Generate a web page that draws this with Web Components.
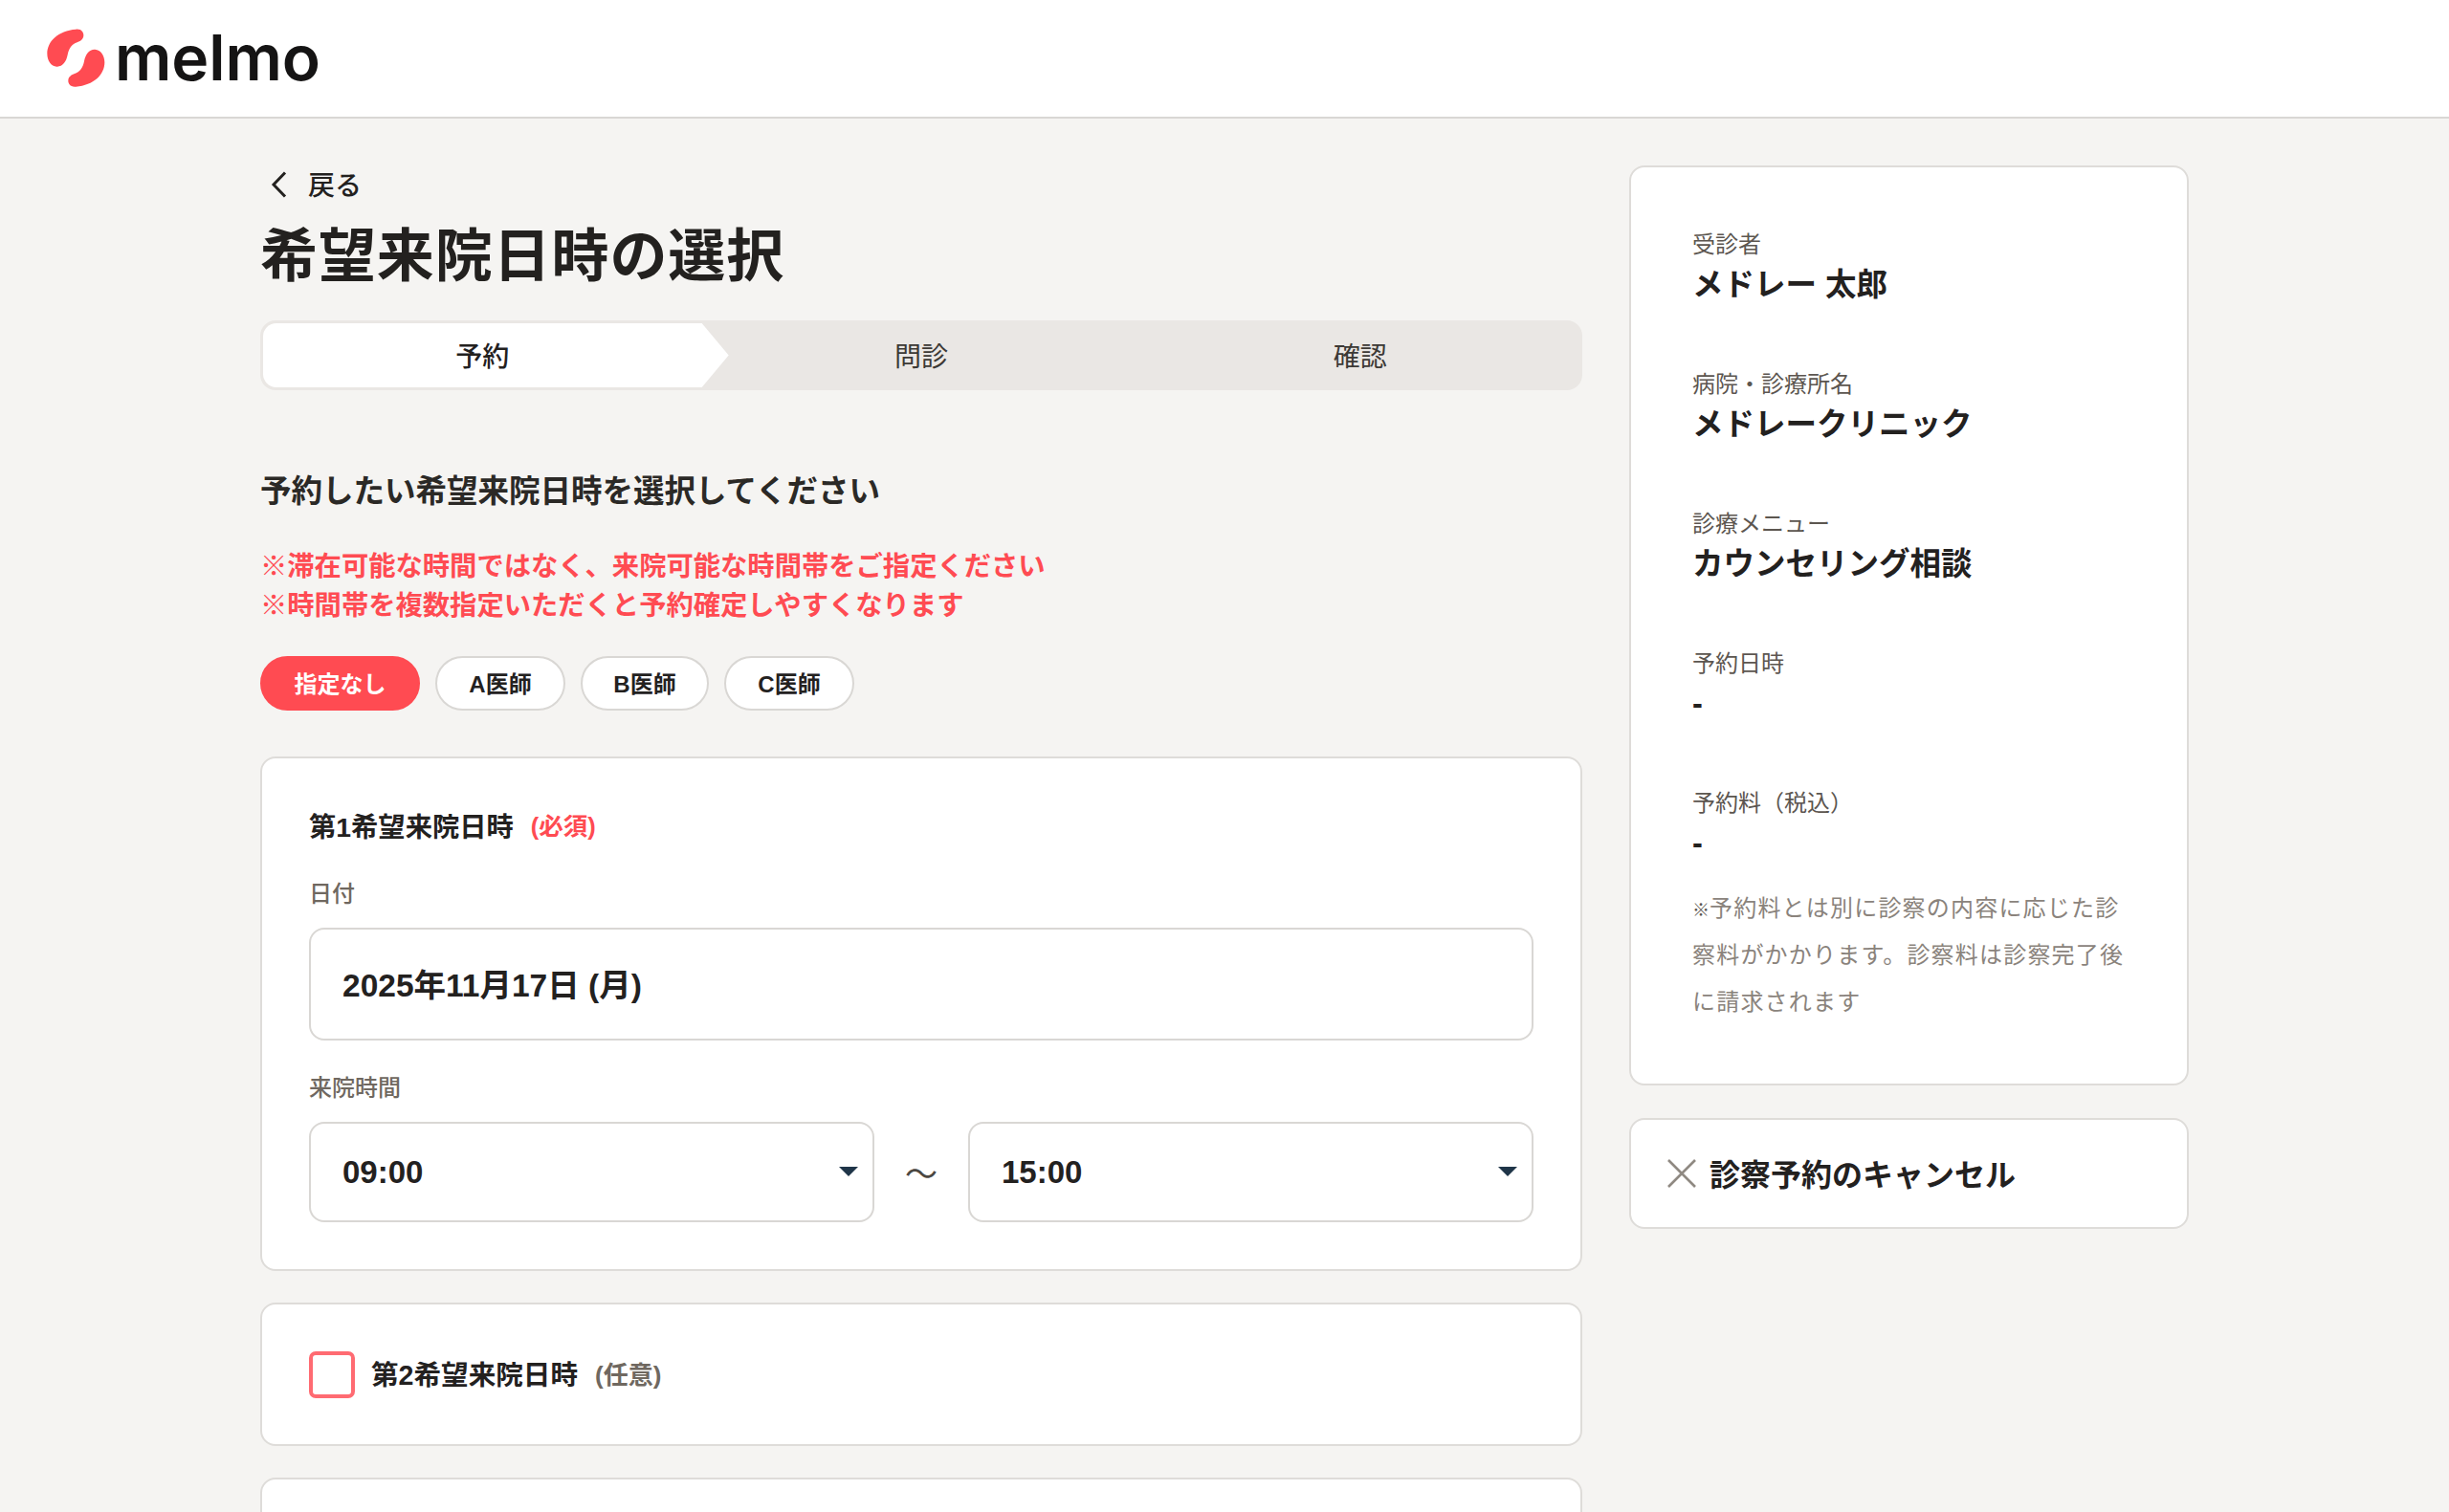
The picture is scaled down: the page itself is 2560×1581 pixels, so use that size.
<!DOCTYPE html>
<html lang="ja">
<head>
<meta charset="utf-8">
<title>melmo</title>
<style>
  html, body { margin: 0; height: 100%; overflow: hidden; }
  body {
    background: #f5f4f2;
    color: #23211f;
    font-family: "Liberation Sans", "Noto Sans CJK JP", sans-serif;
  }
</style>
</head>
<body>
<melmo-header></melmo-header>
<reserve-page>
  <back-link slot="main">戻る</back-link>
  <h-title slot="main">希望来院日時の選択</h-title>
  <step-bar slot="main"></step-bar>
  <lead-text slot="main"></lead-text>
  <chip-row slot="main">
    <doctor-chip active style="width:167px">指定なし</doctor-chip>
    <doctor-chip style="width:136px">A医師</doctor-chip>
    <doctor-chip style="width:134px">B医師</doctor-chip>
    <doctor-chip style="width:136px">C医師</doctor-chip>
  </chip-row>
  <wish-card slot="main"></wish-card>
  <option-card slot="main" label="第2希望来院日時"></option-card>
  <option-card slot="main"></option-card>

  <summary-card slot="side">
    <summary-item label="受診者">メドレー 太郎</summary-item>
    <summary-item label="病院・診療所名">メドレークリニック</summary-item>
    <summary-item label="診療メニュー">カウンセリング相談</summary-item>
    <summary-item label="予約日時">-</summary-item>
    <summary-item label="予約料（税込）">-</summary-item>
  </summary-card>
  <cancel-card slot="side">診察予約のキャンセル</cancel-card>
</reserve-page>

<script>
function define(name, css, html) {
  customElements.define(name, class extends HTMLElement {
    constructor() {
      super();
      this.attachShadow({ mode: "open" });
    }
    connectedCallback() {
      this.shadowRoot.innerHTML = `<style>${css}</style>${typeof html === "function" ? html(this) : html}`;
    }
  });
}

define("melmo-header", `
  :host { display: flex; align-items: center; height: 122px; background: #fff; border-bottom: 2px solid #d9d7d4; padding-left: 40px; }
  svg { display: block; width: 90px; height: 80px; margin-right: -10px; margin-top: -2px; }
  span { font-family: Inter, sans-serif; font-weight: 600; font-size: 66px; letter-spacing: -.1px; color: #151414; line-height: 1; margin-top: -2px; }
`, `
  <svg viewBox="0 0 270 240" aria-hidden="true"><g fill="#ff4b52">
    <path d="M118 32C135 30 143 42 142 52C141 64 131 70 122 73C106 79 96 90 92 112C88 134 76 150 58 149C40 148 28 130 28 108C28 70 62 36 118 32Z"/>
    <path d="M118 32C135 30 143 42 142 52C141 64 131 70 122 73C106 79 96 90 92 112C88 134 76 150 58 149C40 148 28 130 28 108C28 70 62 36 118 32Z" transform="rotate(180 118 122)"/>
  </g></svg>
  <span>melmo</span>
`);

define("reserve-page", `
  :host { display: flex; gap: 49px; width: 2016px; margin: 0 auto; align-items: flex-start; }
  .main { width: 1382px; flex: none; display: flex; flex-direction: column; padding-top: 48px; }
  .side { width: 585px; flex: none; display: flex; flex-direction: column; gap: 34px; padding-top: 49px; }
`, `<div class="main"><slot name="main"></slot></div><div class="side"><slot name="side"></slot></div>`);

define("back-link", `
  :host { display: flex; align-items: center; height: 40px; font-size: 28px; font-weight: 500; color: #23211f; }
  svg { width: 20px; height: 28px; margin: 2px 19px 0 11px; fill: none; stroke: #23211f; stroke-width: 3; }
`, `<svg viewBox="0 0 20 28"><path d="M15 1.5L3 14L15 26.5"/></svg><slot></slot>`);

define("h-title", `
  :host { display: block; font-size: 60px; font-weight: 700; line-height: 80px; margin-top: 17px; color: #23211f; letter-spacing: .9px; }
`, `<slot></slot>`);

define("step-bar", `
  :host { display: flex; height: 73px; margin-top: 26px; background: #eae7e4; border-radius: 16px; padding: 3px; box-sizing: border-box; }
  div { flex: 1; display: flex; align-items: center; justify-content: center; font-size: 28px; color: #3c3935; position: relative; padding-bottom: 2px; }
  .on { background: #fff; border-radius: 14px 0 0 14px; color: #23211f; font-weight: 500; }
  .on::after { content: ""; position: absolute; left: 100%; top: 0; bottom: 0; width: 28px; background: #fff; clip-path: polygon(0 0, 100% 50%, 0 100%); }
`, `<div class="on">予約</div><div>問診</div><div>確認</div>`);

define("lead-text", `
  :host { display: block; margin-top: 82px; }
  h2 { margin: 0; font-size: 32.5px; font-weight: 700; line-height: 48px; color: #2b2926; }
  p { margin: 34px 0 0; font-size: 28.3px; line-height: 41px; font-weight: 700; color: #ff4b52; }
`, `<h2>予約したい希望来院日時を選択してください</h2>
  <p>※滞在可能な時間ではなく、来院可能な時間帯をご指定ください<br>※時間帯を複数指定いただくと予約確定しやすくなります</p>`);

define("chip-row", `
  :host { display: flex; gap: 16px; margin-top: 32px; }
`, `<slot></slot>`);

define("doctor-chip", `
  :host { display: flex; align-items: center; justify-content: center; height: 57px; box-sizing: border-box; border: 2px solid #d9d7d4; border-radius: 29px; background: #fff; font-size: 24px; font-weight: 700; color: #23211f; padding-bottom: 2px; }
  :host([active]) { background: #ff4b52; border-color: #ff4b52; color: #fff; }
`, `<slot></slot>`);

const cardCss = `display: block; box-sizing: border-box; background: #fff; border: 2px solid #dedcd9; border-radius: 16px;`;

define("wish-card", `
  :host { ${cardCss} height: 538px; margin-top: 48px; padding: 50px 49px 0; }
  h3 { margin: 0; font-size: 28.3px; line-height: 44px; font-weight: 700; display: flex; gap: 18px; align-items: center; }
  h3 em { font-style: normal; font-size: 25.5px; color: #ff4b52; margin-top: -2px; }
  label { display: block; font-size: 24px; line-height: 36px; font-weight: 500; color: #6f6860; }
  .date { margin-top: 30px; }
  .box { box-sizing: border-box; border: 2px solid #d9d7d4; border-radius: 16px; display: flex; align-items: center; padding: 0 0 3px 33px; font-weight: 700; color: #23211f; background: #fff; }
  .big { height: 118px; margin-top: 17px; font-size: 33.5px; }
  .time { margin-top: 32px; }
  .row { display: flex; align-items: center; margin-top: 17px; }
  .sel { width: 591px; height: 105px; font-size: 33px; position: relative; flex: none; padding-bottom: 0; }
  .sel::after { content: ""; position: absolute; right: 15px; top: 45px; border-style: solid; border-width: 10px 10px 0; border-color: #1f3548 transparent transparent; }
  .tilde { flex: 1; text-align: center; font-size: 34px; color: #4b4742; font-weight: 400; }
`, `
  <h3>第1希望来院日時<em>(必須)</em></h3>
  <div class="date">
    <label>日付</label>
    <div class="box big">2025年11月17日 (月)</div>
  </div>
  <div class="time">
    <label>来院時間</label>
    <div class="row">
      <div class="box sel">09:00</div>
      <div class="tilde">〜</div>
      <div class="box sel">15:00</div>
    </div>
  </div>
`);

define("option-card", `
  :host { ${cardCss} height: 150px; margin-top: 33px; padding: 0 49px; display: flex; align-items: center; flex: none; }
  i { width: 48px; height: 49px; box-sizing: border-box; border: 4px solid #ff6b72; border-radius: 7px; flex: none; }
  b { margin-left: 17px; margin-top: 2px; font-size: 28.6px; font-weight: 700; line-height: 44px; }
  em { margin-left: 18px; margin-top: -3px; font-style: normal; font-weight: 700; font-size: 26px; color: #6f6860; }
`, el => el.hasAttribute("label") ? `<i></i><b>${el.getAttribute("label")}</b><em>(任意)</em>` : ``);

define("summary-card", `
  :host { ${cardCss} height: 962px; padding: 59px 64px 0; }
  slot { display: flex; flex-direction: column; gap: 46px; }
  .note { margin-top: 7px; font-size: 24px; letter-spacing: 1.2px; line-height: 49px; color: #8a837c; }
  .first { display: flex; align-items: center; }
  small { font-size: 18px; line-height: 1; letter-spacing: 0; color: #5c5650; margin-top: 4px; }
`, `<slot></slot>
  <div class="note">
    <div class="first"><small>※</small><span>予約料とは別に診察の内容に応じた診</span></div>
    <div>察料がかかります。診察料は診察完了後</div>
    <div>に請求されます</div>
  </div>`);

define("summary-item", `
  :host { display: block; height: 100px; }
  div { font-size: 24px; line-height: 40px; margin-top: 2px; color: #5c5650; }
  strong { display: block; font-size: 32.5px; line-height: 44px; font-weight: 700; color: #23211f; }
`, el => `<div>${el.getAttribute("label")}</div><strong><slot></slot></strong>`);

define("cancel-card", `
  :host { ${cardCss} height: 116px; padding: 0 37px 2px; display: flex; align-items: center; font-size: 32px; font-weight: 700; color: #23211f; }
  svg { width: 32px; height: 32px; margin-right: 13px; margin-top: 2px; fill: none; stroke: #8f8982; stroke-width: 2.6; flex: none; }
`, `<svg viewBox="0 0 32 32"><path d="M2 2L30 30M30 2L2 30"/></svg><slot></slot>`);
</script>
</body>
</html>
